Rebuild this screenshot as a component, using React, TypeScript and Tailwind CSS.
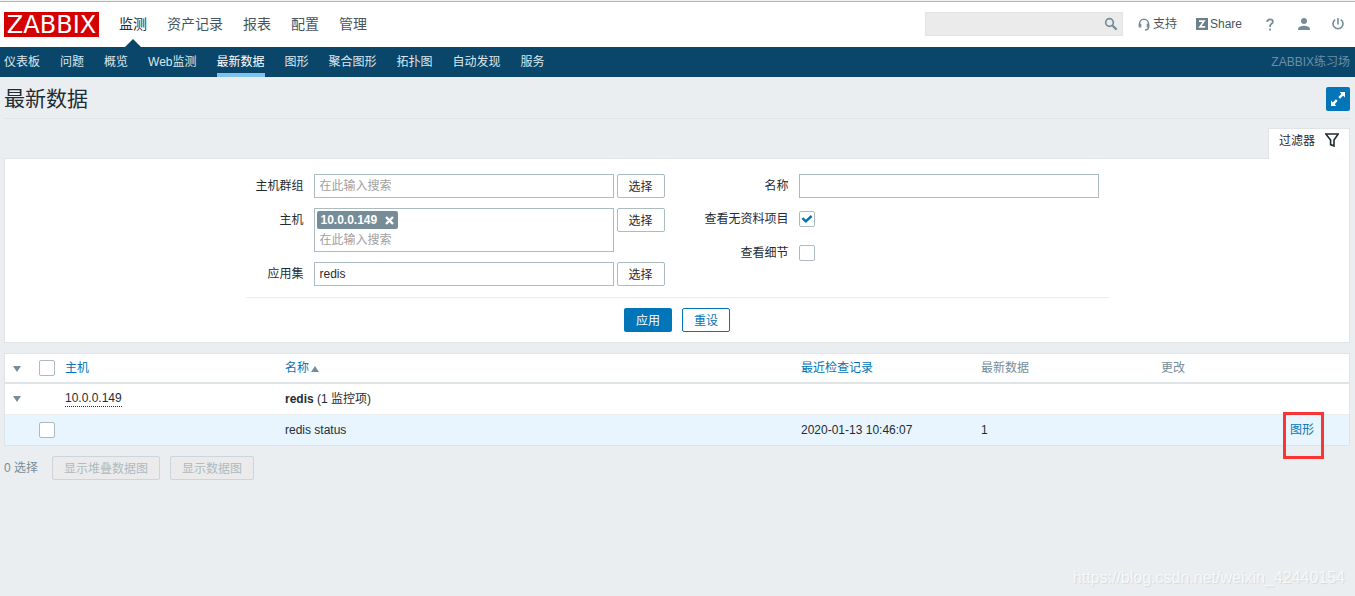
import type { InputHTMLAttributes } from 'react';

const mainMenu = ['监测', '资产记录', '报表', '配置', '管理'];

const subMenu = ['仪表板', '问题', '概览', 'Web监测', '最新数据', '图形', '聚合图形', '拓扑图', '自动发现', '服务'];

const Checkbox = (props: InputHTMLAttributes<HTMLInputElement>) => (
  <span className="relative block h-4 w-4">
    <input
      type="checkbox"
      className="peer block h-4 w-4 appearance-none rounded-xs border border-[#acbbc2] bg-white"
      {...props}
    />
    <svg
      viewBox="0 0 16 16"
      className="pointer-events-none absolute inset-0 hidden h-4 w-4 peer-checked:block"
      fill="none"
      stroke="#0275b8"
      strokeWidth="2.4"
    >
      <path d="M3.4 7.2 L6.8 10.4 L12.6 5" />
    </svg>
  </span>
);

const SelectButton = () => (
  <button type="button" className="h-6 w-12 shrink-0 rounded-xs border border-[#acbbc2] bg-white pt-px text-[#1f2c33]">
    选择
  </button>
);

const Triangle = ({ up = false }: { up?: boolean }) => (
  <svg viewBox="0 0 8 6" className="inline-block h-[6px] w-2" fill="#768d99">
    <path d={up ? 'M0 6 L4 0 L8 6 Z' : 'M0 0 L8 0 L4 6 Z'} />
  </svg>
);

const Header = () => (
  <header className="bg-white">
    <div className="h-[2px] border-b border-[#b4b4b4] bg-[#f2f2f2]" />
    <div className="flex h-[45px] items-center justify-between pl-1 pr-[11px]">
      <div className="flex items-center">
        <a
          href="#"
          className="flex h-[25px] w-[95px] items-center justify-center bg-[#d40000] font-['DejaVu_Sans'] text-2xl leading-none text-white"
        >
          ZABBIX
        </a>
        <nav className="ml-5 flex h-[45px] items-center gap-5 text-sm">
          {mainMenu.map((item, i) => (
            <a
              key={item}
              href="#"
              className={`relative flex h-full items-center pb-[2px] ${i === 0 ? 'text-[#1f2c33]' : 'text-[#48555c]'}`}
            >
              {item}
              {i === 0 && (
                <svg viewBox="0 0 16 8" className="absolute bottom-0 left-1/2 h-2 w-4 -translate-x-1/2" fill="#0a466a">
                  <path d="M0 8 L8 0 L16 8 Z" />
                </svg>
              )}
            </a>
          ))}
        </nav>
      </div>

      <div className="flex items-center pb-px text-[#48555c]">
        <div className="relative">
          <input
            type="text"
            aria-label="搜索"
            className="block h-6 w-[198px] border border-[#e3e3e3] bg-[#ebebeb] pl-1 pr-6"
          />
          <button type="button" aria-label="搜索" className="absolute right-[5px] top-[5px]">
            <svg viewBox="0 0 14 14" className="h-[14px] w-[14px]" fill="none" stroke="#768d99">
              <circle cx="5.5" cy="5.5" r="3.8" strokeWidth="1.7" />
              <path d="M8.2 8.2 L12.6 12.6" strokeWidth="2.2" />
            </svg>
          </button>
        </div>
        <a href="#" className="ml-[15px] flex items-center gap-[3px]">
          <svg viewBox="0 0 12 13" className="h-[13px] w-3" fill="none" stroke="#768d99">
            <path d="M1.5 8 V5.8 A4.5 4.5 0 0 1 10.5 5.8 V9 Q10.5 12 7 12" strokeWidth="1.5" />
            <path d="M2 5.8 V9.6 M10 5.8 V9.6" strokeWidth="2.6" />
          </svg>
          支持
        </a>
        <a href="#" className="ml-[19px] flex items-center gap-[2px]">
          <svg viewBox="0 0 12 12" className="h-3 w-3">
            <rect width="12" height="12" fill="#6b808b" />
            <path d="M3 3.2 H8 L4 8.8 H9.2" fill="none" stroke="#fff" strokeWidth="1.7" />
          </svg>
          Share
        </a>
        <a href="#" aria-label="帮助" className="ml-6 flex h-4 w-2 items-center">
          <svg viewBox="0 0 8 13" className="h-[13px] w-2" fill="none" stroke="#768d99" strokeWidth="1.8">
            <path d="M1.2 4 Q1.2 1.4 4 1.4 Q6.8 1.4 6.8 3.7 Q6.8 5.1 5.3 6.1 Q4 7 4 9" />
            <path d="M4 10.6 V12.6" />
          </svg>
        </a>
        <a href="#" aria-label="用户" className="ml-6 flex h-4 w-3 items-center">
          <svg viewBox="0 0 12 12" className="h-3 w-3" fill="#768d99">
            <circle cx="6" cy="3" r="3" />
            <path d="M0 12 V10.6 Q1.2 7.8 6 7.8 Q10.8 7.8 12 10.6 V12 Z" />
          </svg>
        </a>
        <a href="#" aria-label="退出" className="ml-[22px] flex h-4 w-3 items-center">
          <svg viewBox="0 0 12 12" className="h-3 w-3" fill="none" stroke="#768d99" strokeWidth="1.6">
            <path d="M3.2 1.6 A5 5 0 1 0 8.8 1.6" />
            <path d="M6 0 V6.4" />
          </svg>
        </a>
      </div>
    </div>

    <div className="flex h-[30px] items-center justify-between bg-[#0a466a] pl-1 pr-[5px]">
      <nav className="flex h-full gap-5">
        {subMenu.map((item) => (
          <a
            key={item}
            href="#"
            className={`flex items-center border-y-4 border-t-transparent ${
              item === '最新数据' ? 'border-b-[#7ec0ee] text-white' : 'border-b-transparent text-[#dbe6ed]'
            }`}
          >
            {item}
          </a>
        ))}
      </nav>
      <span className="text-[#6b8fa5]">ZABBIX练习场</span>
    </div>
  </header>
);

const Filter = () => (
  <section>
    <div className="flex justify-end">
      <button
        type="button"
        className="relative -mb-px flex h-[31px] w-[82px] justify-center gap-[10px] border border-b-0 border-[#dfe4e7] bg-white pt-1"
      >
        过滤器
        <svg viewBox="0 0 14 14" className="h-[14px] w-[14px]" fill="none" stroke="#1f2c33" strokeWidth="1.6">
          <path d="M0.8 1 H13.2 L9 7 V13 L5.6 11.6 V7 Z" />
        </svg>
      </button>
    </div>
    <form className="flex justify-center border border-[#dfe4e7] bg-white pb-[10px] pt-[15px]">
      <div>
        <div className="flex gap-10 border-b border-[#ebeef0] px-[10px] pb-[11px]">
          <div className="flex flex-col gap-[10px]">
            <div className="flex">
              <label htmlFor="groups" className="mr-[10px] w-12 pt-1 text-right">主机群组</label>
              <input
                id="groups"
                type="text"
                placeholder="在此输入搜索"
                className="mr-[3px] h-6 w-[300px] border border-[#acbbc2] px-[5px] placeholder:text-[#a0a0a0]"
              />
              <SelectButton />
            </div>
            <div className="flex">
              <label htmlFor="hosts" className="mr-[10px] w-12 pt-1 text-right">主机</label>
              <div className="mr-[3px] h-11 w-[300px] border border-[#acbbc2] p-[2px]">
                <span className="flex h-[18px] w-[81px] items-center justify-between rounded-xs bg-[#768d99] px-1 font-bold text-white">
                  10.0.0.149
                  <button type="button" aria-label="移除">
                    <svg viewBox="0 0 9 9" className="h-[9px] w-[9px]" stroke="#fff" strokeWidth="2.4">
                      <path d="M1 1 L8 8 M8 1 L1 8" />
                    </svg>
                  </button>
                </span>
                <input
                  id="hosts"
                  type="text"
                  placeholder="在此输入搜索"
                  className="mt-px block h-5 w-full px-[3px] placeholder:text-[#a0a0a0]"
                />
              </div>
              <SelectButton />
            </div>
            <div className="flex">
              <label htmlFor="application" className="mr-[10px] w-12 pt-1 text-right">应用集</label>
              <input
                id="application"
                type="text"
                defaultValue="redis"
                className="mr-[3px] h-6 w-[300px] border border-[#acbbc2] px-[5px]"
              />
              <SelectButton />
            </div>
          </div>

          <div className="flex flex-col gap-[10px]">
            <div className="flex h-6">
              <label htmlFor="name" className="mr-[10px] w-[84px] pt-1 text-right">名称</label>
              <input id="name" type="text" className="h-6 w-[300px] border border-[#acbbc2] px-[5px]" />
            </div>
            <div className="flex h-6 items-center pb-[2px]">
              <label htmlFor="without-data" className="mr-[10px] w-[84px] text-right">查看无资料项目</label>
              <Checkbox id="without-data" defaultChecked />
            </div>
            <div className="flex h-6 items-center pb-[2px]">
              <label htmlFor="details" className="mr-[10px] w-[84px] text-right">查看细节</label>
              <Checkbox id="details" />
            </div>
          </div>
        </div>

        <div className="flex justify-center gap-[10px] pt-[10px]">
          <button type="button" className="h-6 w-12 rounded-xs bg-[#0275b8] pt-px text-white">应用</button>
          <button type="button" className="h-6 w-12 rounded-xs border border-[#0275b8] bg-white pt-px text-[#0275b8]">
            重设
          </button>
        </div>
      </div>
    </form>
  </section>
);

const DataTable = () => (
  <div className="mt-[10px] border border-[#dfe4e7] bg-white">
    <table className="w-full table-fixed border-collapse text-left">
      <colgroup>
        <col className="w-[29px]" />
        <col className="w-[26px]" />
        <col className="w-[220px]" />
        <col />
        <col className="w-[180px]" />
        <col className="w-[180px]" />
        <col className="w-[124px]" />
        <col className="w-[69px]" />
      </colgroup>
      <thead>
        <tr className="h-[29px] border-b-2 border-[#dfe4e7] text-[#768d99]">
          <th className="pl-2">
            <button type="button" aria-label="全部展开" className="block">
              <Triangle />
            </button>
          </th>
          <th className="pl-[5px]">
            <Checkbox aria-label="全选" />
          </th>
          <th className="px-[5px] font-normal">
            <a href="#" className="text-[#0275b8]">主机</a>
          </th>
          <th className="px-[5px] font-normal">
            <a href="#" className="text-[#0275b8]">
              名称 <span className="-ml-px"><Triangle up /></span>
            </a>
          </th>
          <th className="px-[5px] font-normal">
            <a href="#" className="text-[#0275b8]">最近检查记录</a>
          </th>
          <th className="px-[5px] font-normal">最新数据</th>
          <th className="px-[5px] font-normal">更改</th>
          <th />
        </tr>
      </thead>
      <tbody>
        <tr className="h-[31px] border-b border-[#ebeef0]">
          <td className="pb-[2px] pl-2">
            <button type="button" aria-label="展开" className="block">
              <Triangle />
            </button>
          </td>
          <td />
          <td className="px-[5px]">
            <a href="#" className="inline-block border-b border-dotted border-[#1f2c33] leading-4">10.0.0.149</a>
          </td>
          <td className="px-[5px]" colSpan={5}>
            <b>redis</b> (1 监控项)
          </td>
        </tr>
        <tr className="h-[31px] bg-[#e8f5ff]">
          <td />
          <td className="pl-[5px]">
            <Checkbox aria-label="redis status" />
          </td>
          <td />
          <td className="px-[5px]">redis status</td>
          <td className="px-[5px]">2020-01-13 10:46:07</td>
          <td className="px-[5px]">1</td>
          <td />
          <td className="px-[10px]">
            <span className="relative inline-block">
              <a href="#" className="text-[#0275b8]">图形</a>
              <span className="pointer-events-none absolute -left-[7px] -top-[10px] h-[47px] w-[41px] border-3 border-[#fb3536]" />
            </span>
          </td>
        </tr>
      </tbody>
    </table>
  </div>
);

const App = () => {
  return (
    <div className="relative min-h-screen bg-[#ebeef0] font-['Liberation_Sans','Noto_Sans_CJK_SC',sans-serif] text-xs text-[#1f2c33]">
      <Header />
      <main className="pl-1 pr-[5px]">
        <div className="flex h-[42px] items-center justify-between border-b border-[#dfe4e7] pt-[3px]">
          <h1 className="text-[21px] leading-7">最新数据</h1>
          <button
            type="button"
            aria-label="全屏"
            className="flex h-6 w-6 items-center justify-center rounded-xs bg-[#0275b8]"
          >
            <svg viewBox="0 0 14 14" className="h-[14px] w-[14px]" fill="#fff" stroke="#fff">
              <path d="M8.6 0 H14 V5.4 Z M0 8.6 V14 H5.4 Z" stroke="none" />
              <path d="M8.2 5.8 L11.6 2.4 M2.4 11.6 L5.8 8.2" strokeWidth="2.4" />
            </svg>
          </button>
        </div>
        <div className="pt-[9px]">
          <Filter />
        </div>
        <DataTable />
        <div className="mt-[10px] flex items-center text-[#768d99]">
          <span className="mr-[14px]">0 选择</span>
          <button
            type="button"
            disabled
            className="mr-[10px] h-6 rounded-xs border border-[#ccd5d9] bg-[#ebebeb] px-[11px] pt-px text-[#acbbc2]"
          >
            显示堆叠数据图
          </button>
          <button
            type="button"
            disabled
            className="h-6 rounded-xs border border-[#ccd5d9] bg-[#ebebeb] px-[11px] pt-px text-[#acbbc2]"
          >
            显示数据图
          </button>
        </div>
      </main>
      <span className="absolute bottom-[6px] right-[10px] text-base text-[#f6f8f9] [text-shadow:1px_1px_1px_#d3d7d9]">
        https://blog.csdn.net/weixin_42440154
      </span>
    </div>
  );
};

export default App;
